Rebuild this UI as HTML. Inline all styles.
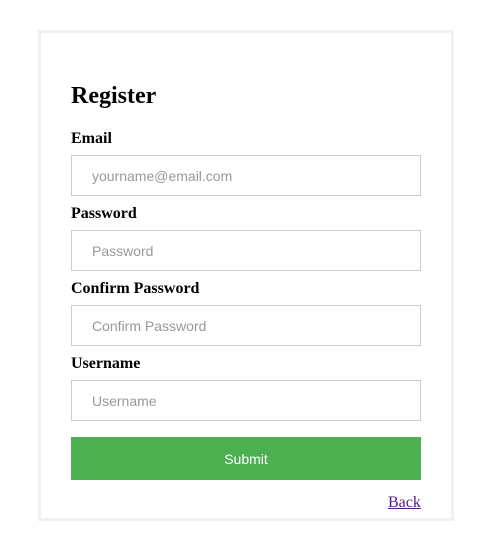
<!DOCTYPE html>
<html><head><meta charset="utf-8"><style>
html,body{margin:0;padding:0;background:#fff;width:497px;height:557px;overflow:hidden;font-family:"Liberation Serif",serif;}
.box{position:absolute;left:38px;top:30px;width:410px;height:485px;border:3px solid #f1f1f1;}
h1{position:absolute;left:71px;top:81px;margin:0;font-size:24px;font-weight:bold;line-height:30px;}
.l{position:absolute;left:71px;font-weight:bold;font-size:16px;line-height:20px;}
.i{position:absolute;left:71px;width:348px;height:39px;border:1px solid #ccc;font-family:"Liberation Sans",sans-serif;font-size:14px;color:#999;line-height:40px;box-sizing:content-box;}
.i span{padding-left:20px;}
.btn{position:absolute;left:71px;top:437px;width:350px;height:43px;background:#4caf50;color:#fff;font-family:"Liberation Sans",sans-serif;font-size:14px;text-align:center;line-height:44px;}
.back{position:absolute;left:388px;top:493px;font-size:16px;color:#551a8b;text-decoration:underline;line-height:20px;}
</style></head><body>
<div class="box"></div>
<h1>Register</h1>
<div class="l" style="top:129px">Email</div>
<div class="i" style="top:155px"><span>yourname@email.com</span></div>
<div class="l" style="top:204px">Password</div>
<div class="i" style="top:230px"><span>Password</span></div>
<div class="l" style="top:279px">Confirm Password</div>
<div class="i" style="top:305px"><span>Confirm Password</span></div>
<div class="l" style="top:354px">Username</div>
<div class="i" style="top:380px"><span>Username</span></div>
<div class="btn">Submit</div>
<div class="back">Back</div>
</body></html>
